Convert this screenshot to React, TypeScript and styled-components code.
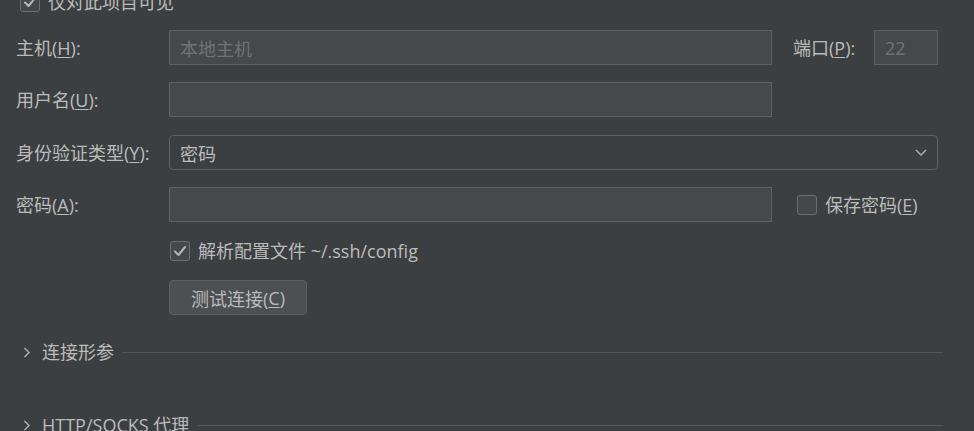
import React from "react";
import styled, { createGlobalStyle } from "styled-components";

const Global = createGlobalStyle`
  html, body { margin: 0; padding: 0; background: #3c3f41; }
  body { width: 974px; height: 431px; overflow: hidden; }
  * { box-sizing: border-box; }
`;

const Page = styled.div`
  width: 974px;
  height: 431px;
  background: #3c3f41;
  color: #bbbbbb;
  font-family: "Open Sans", "Noto Sans CJK SC", sans-serif;
  font-size: 18px;
  padding: 0 31px 0 16px;
  display: flex;
  flex-direction: column;
  overflow: hidden;
`;

const Row = styled.div<{ $top: number; $indent?: number }>`
  display: flex;
  align-items: center;
  margin-top: ${(p) => p.$top}px;
  margin-left: ${(p) => p.$indent ?? 0}px;
  height: 35px;
  flex-shrink: 0;
`;

const CheckRow = styled.div<{ $top: number; $indent: number }>`
  display: flex;
  align-items: center;
  gap: 8px;
  height: 20px;
  margin-top: ${(p) => p.$top}px;
  margin-left: ${(p) => p.$indent}px;
  flex-shrink: 0;
  white-space: nowrap;
`;

const Label = styled.div<{ $w?: number }>`
  width: ${(p) => (p.$w ? `${p.$w}px` : "auto")};
  flex-shrink: 0;
  white-space: nowrap;
  line-height: 20px;
`;

const U = styled.span`
  text-decoration: underline;
  text-underline-offset: 2px;
  text-decoration-thickness: 1px;
`;

const Field = styled.div<{ $w: number; $muted?: boolean }>`
  width: ${(p) => p.$w}px;
  height: 35px;
  flex-shrink: 0;
  background: #45494a;
  border: 1px solid #5e6161;
  padding: 0 10px;
  display: flex;
  align-items: center;
  color: ${(p) => (p.$muted ? "#707374" : "#bbbbbb")};
  white-space: nowrap;
`;

const Select = styled.div`
  width: 769px;
  height: 35px;
  flex-shrink: 0;
  border: 1px solid #5e6161;
  border-radius: 4px;
  padding: 0 10px 0 10px;
  display: flex;
  align-items: center;
  justify-content: space-between;
`;

const Box = styled.div<{ $checked?: boolean }>`
  width: 20px;
  height: 20px;
  flex-shrink: 0;
  border: 1px solid #6b6e70;
  border-radius: 3px;
  background: #43494a;
  display: flex;
  align-items: center;
  justify-content: center;
`;

const Button = styled.div`
  width: 138px;
  height: 35px;
  background: #4c5052;
  border: 1px solid #5e6161;
  border-radius: 4px;
  display: flex;
  align-items: center;
  justify-content: center;
  flex-shrink: 0;
`;

const Section = styled.div<{ $top: number }>`
  display: flex;
  align-items: center;
  height: 24px;
  margin-top: ${(p) => p.$top}px;
  flex-shrink: 0;
  padding-left: 7px;
  white-space: nowrap;
`;

const SectionTitle = styled.span`
  margin-left: 11px;
  margin-right: 8px;
  line-height: 20px;
`;

const Rule = styled.div`
  flex: 1;
  height: 1px;
  background: #535556;
`;

const Check = () => (
  <svg width="14" height="12" viewBox="0 0 14 12">
    <path d="M2 6.5 L5.5 10 L12 2" fill="none" stroke="#b5b5b5" strokeWidth="2" strokeLinecap="round" strokeLinejoin="round" />
  </svg>
);

const ChevronDown = () => (
  <svg width="12" height="7" viewBox="0 0 12 7">
    <path d="M1 1 L6 6 L11 1" fill="none" stroke="#a9abad" strokeWidth="1.5" />
  </svg>
);

const ChevronRight = () => (
  <svg width="8" height="11" viewBox="0 0 8 11">
    <path d="M1.5 1 L6 5.5 L1.5 10" fill="none" stroke="#a9abad" strokeWidth="1.5" />
  </svg>
);

export default function App() {
  return (
    <>
      <Global />
      <Page>
        <CheckRow $top={-8} $indent={4}>
          <Box $checked>
            <Check />
          </Box>
          <Label>仅对此项目可见</Label>
        </CheckRow>

        <Row $top={18}>
          <Label $w={153}>
            主机(<U>H</U>):
          </Label>
          <Field $w={603} $muted>本地主机</Field>
          <Label style={{ marginLeft: 21, width: 81 }}>
            端口(<U>P</U>):
          </Label>
          <Field $w={64} $muted>22</Field>
        </Row>

        <Row $top={17}>
          <Label $w={153}>
            用户名(<U>U</U>):
          </Label>
          <Field $w={603} />
        </Row>

        <Row $top={18}>
          <Label $w={153}>
            身份验证类型(<U>Y</U>):
          </Label>
          <Select>
            <span>密码</span>
            <ChevronDown />
          </Select>
        </Row>

        <Row $top={17}>
          <Label $w={153}>
            密码(<U>A</U>):
          </Label>
          <Field $w={603} />
          <CheckRow $top={0} $indent={25}>
            <Box />
            <Label>
              保存密码(<U>E</U>)
            </Label>
          </CheckRow>
        </Row>

        <CheckRow $top={19} $indent={154}>
          <Box $checked>
            <Check />
          </Box>
          <Label>解析配置文件 ~/.ssh/config</Label>
        </CheckRow>

        <Row $top={19} $indent={153}>
          <Button>
            测试连接(<U>C</U>)
          </Button>
        </Row>

        <Section $top={25}>
          <ChevronRight />
          <SectionTitle>连接形参</SectionTitle>
          <Rule />
        </Section>

        <Section $top={49}>
          <ChevronRight />
          <SectionTitle>HTTP/SOCKS 代理</SectionTitle>
          <Rule />
        </Section>
      </Page>
    </>
  );
}
